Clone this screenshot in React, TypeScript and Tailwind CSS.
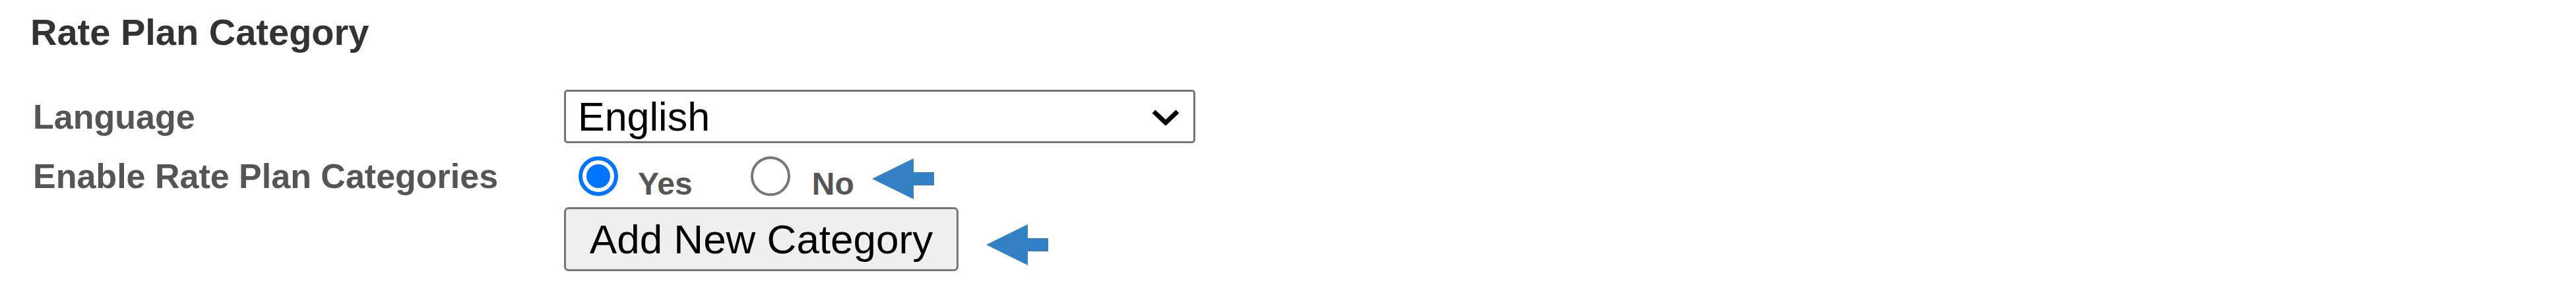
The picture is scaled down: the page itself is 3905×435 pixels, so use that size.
import { useState } from 'react';

const Arrow = () => (
  <svg width="94" height="62" viewBox="0 0 94 62">
    <path d="M0 31 L63 0 L63 21 L94 21 L94 41 L63 41 L63 62 Z" fill="#3380c4" />
  </svg>
);

const Radio = ({ checked, onClick }: { checked: boolean; onClick: () => void }) => (
  <span
    onClick={onClick}
    className={
      checked
        ? 'flex h-[60px] w-[60px] shrink-0 items-center justify-center rounded-full border-[6px] border-[#0075ff] bg-white'
        : 'flex h-[60px] w-[60px] shrink-0 items-center justify-center rounded-full border-[4px] border-[#767676] bg-white'
    }
  >
    {checked && <span className="h-[36px] w-[36px] rounded-full bg-[#0075ff]" />}
  </span>
);

const App = () => {
  const [enabled, setEnabled] = useState(true);
  const [lang, setLang] = useState('en');

  return (
    <div className="min-h-[435px] w-[3905px] bg-white font-['Liberation_Sans',Arial,sans-serif]">
      <h1 className="pt-[17px] pl-[46px] text-[56px] leading-[64px] font-bold text-[#333]">
        Rate Plan Category
      </h1>

      <div className="mt-[55px] pl-[50px]">
        <div className="flex h-[81px] items-center">
          <div className="w-[805px] text-[52px] leading-[60px] font-bold text-[#555]">Language</div>
          <div className="relative h-[81px] w-[957px]">
            <select
              value={lang}
              onChange={(e) => setLang(e.target.value)}
              className="h-full w-full appearance-none rounded-[5px] border-[3px] border-[#767676] bg-white pl-[18px] text-[61px] leading-[70px] text-black outline-none"
            >
              <option value="en">English</option>
              <option value="fr">French</option>
              <option value="es">Spanish</option>
            </select>
            <svg
              className="pointer-events-none absolute top-[29px] right-[23px]"
              width="44"
              height="25"
              viewBox="0 0 44 25"
            >
              <polyline points="4,4 22,21 40,4" fill="none" stroke="#000" strokeWidth="7" />
            </svg>
          </div>
        </div>

        <div className="flex h-[97px] items-start">
          <div className="mt-[20px] w-[805px] text-[52px] leading-[60px] font-bold text-[#555]">
            Enable Rate Plan Categories
          </div>
          <div className="flex items-start">
            <div className="mt-[20px] ml-[22px]">
              <Radio checked={enabled} onClick={() => setEnabled(true)} />
            </div>
            <span className="mt-[34px] ml-[30px] text-[48px] leading-[56px] font-bold text-[#555]">Yes</span>
            <div className="mt-[20px] ml-[88px]">
              <Radio checked={!enabled} onClick={() => setEnabled(false)} />
            </div>
            <span className="mt-[34px] ml-[33px] text-[48px] leading-[56px] font-bold text-[#555]">No</span>
            <div className="mt-[23px] ml-[27px]">
              <Arrow />
            </div>
          </div>
        </div>

        <div className="flex items-start">
          <div className="w-[805px]" />
          <button className="h-[97px] w-[598px] rounded-[7px] border-[3px] border-[#767676] bg-[#efefef] text-[62px] leading-[70px] text-black">
            Add New Category
          </button>
          <div className="mt-[26px] ml-[42px]">
            <Arrow />
          </div>
        </div>
      </div>
    </div>
  );
};

export default App;
